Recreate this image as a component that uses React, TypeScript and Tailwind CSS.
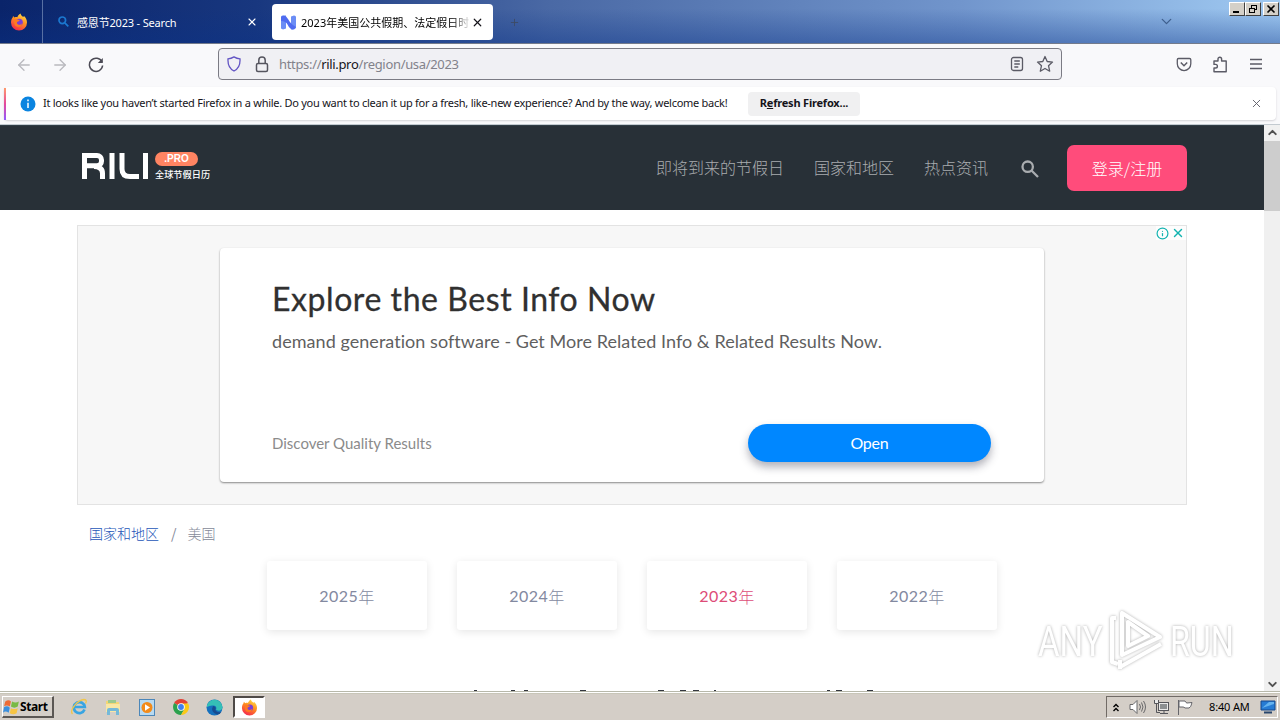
import React from "react";
import { ArrowLeft, ArrowRight, ChevronDown, ChevronUp, X, Info, Plus } from "lucide-react";

const ui = "font-['Noto_Sans','Noto_Sans_CJK_SC',sans-serif]";

function Firefox({ size }: { size: number }) {
  return (
    <svg width={size} height={size} viewBox="0 0 18 18" className="shrink-0">
      <defs>
        <linearGradient id="ff" x1="0.8" y1="0" x2="0.3" y2="1">
          <stop offset="0" stopColor="#ffe34a" />
          <stop offset="0.45" stopColor="#ff9020" />
          <stop offset="1" stopColor="#f5264e" />
        </linearGradient>
      </defs>
      <path
        d="M1 9.5C1 7 1.8 5.300 2.700 4.400L3 3l1.600 1.500C5.500 4 6.500 4 7.300 4.300 8 2.500 9 1.200 10.500.5c.2 1.700 1.500 2.400 2.700 3.600l.8-1c1.700 1.500 3 3.700 3 6.400a8 8 0 0 1-16 0z"
        fill="url(#ff)"
      />
      <circle cx="9.300" cy="9.300" r="3.500" fill="#7a3fd6" />
      <path d="M4 6.500c1.500-.8 3-.5 4 .3l1.800.4c-.4 1-1.500 1-2.300 1.500-.8.600-.8 2 .500 2.700 1.500.8 3.500 0 4-1.500-.1 3-2.500 4.200-4.500 3.900C5 13.500 3.800 11 4 6.500z" fill="#ff7a22" />
    </svg>
  );
}

function TabStrip() {
  return (
    <div className="relative flex h-[43px] shrink-0 bg-[linear-gradient(to_bottom,rgba(10,36,106,0)_20%,rgba(10,50,135,0.4)_100%),linear-gradient(to_right,#0a246a_0%,#18377f_20%,#4a69a5_43%,#7195cc_75%,#a0caf2_100%)]">
      <div className="flex w-[43px] items-center justify-center border-r border-[#5870a3] pr-1">
        <Firefox size={18} />
      </div>
      <div className="flex w-[229px] items-center pl-[15px] pr-[14px]">
        <svg width="11" height="11" viewBox="0 0 11 11" fill="none" stroke="#1b78d0" strokeWidth="1.700">
          <circle cx="4.300" cy="4.300" r="3.300" />
          <path d="M6.800 6.800L10.300 10.300" />
        </svg>
        <span className="ml-2 mt-[3px] flex-1 whitespace-nowrap text-[11px] tracking-[-0.18px] text-white">感恩节2023 - Search</span>
        <X size={12} strokeWidth={2.200} className="text-white" />
      </div>
      <div className="mt-1 flex h-9 w-[221px] items-center rounded-[4px] bg-white pl-[9px] pr-[9px]">
        <svg width="15" height="15" viewBox="0 0 15 15" className="shrink-0">
          <path d="M0 2Q0 .5 1.500.500H5v13L2 14.500 0 13.500z" fill="#6b8df5" />
          <path d="M10 1.500l3-1q2 0 2 1.500v11l-2 1.500h-3z" fill="#6b8df5" />
          <path d="M0 2Q4-1.500 7 4T15 12Q13 15.500 10 14 8 13 6.500 9.500T0 6z" fill="#4f6bf0" />
        </svg>
        <span className="ml-[5px] mt-[2px] w-[172px] shrink-0 whitespace-nowrap text-[11px] text-black [mask-image:linear-gradient(to_right,black_88%,transparent_99%)]">
          2023年美国公共假期、法定假日时
        </span>
        <X size={13} strokeWidth={2.200} className="-ml-[2px] shrink-0 text-[#15141a]" />
      </div>
      <div className="flex flex-1 items-center pl-4">
        <Plus size={11} strokeWidth={2} className="mt-0.5 text-[#3c4a66]" />
        <ChevronDown size={17} strokeWidth={1.800} className="ml-auto mr-[105px] text-[#3f5f8d]" />
      </div>
      <div className="absolute right-[1px] top-[2px] flex">
        {["min", "restore", "close"].map((k) => (
          <div key={k} className={`flex h-[14px] w-4 items-center justify-center border border-b-[#404040] border-l-white border-r-[#404040] border-t-white bg-[#d4d0c8] ${k === "close" ? "ml-[2px]" : ""}`}>
            <svg width="10" height="10" viewBox="0 0 10 10" fill="none" stroke="#000" shapeRendering="crispEdges">
              {k === "min" && <path d="M1 8h6" strokeWidth="2" />}
              {k === "restore" && <path d="M3 1.500h6M3 1v3M8.500 1v5M6 5.500h3M1 4.500h6M1.500 4v5M6.500 4v5M1 8.500h6" />}
              {k === "close" && <path d="M1.500 1.500l7 7M8.500 1.500l-7 7" strokeWidth="1.600" shapeRendering="auto" />}
            </svg>
          </div>
        ))}
      </div>
    </div>
  );
}

function NavBar() {
  return (
    <div className="flex h-[44px] shrink-0 items-center border-t border-[#747b8b] bg-[#f9f9fb] pb-[3px] text-[#5b5b66]">
      <ArrowLeft size={18} strokeWidth={1.700} className="ml-[15px] mt-px text-[#b9b9be]" />
      <ArrowRight size={18} strokeWidth={1.700} className="ml-[18px] mt-px text-[#b9b9be]" />
      <svg width="16" height="16" viewBox="0 0 16 16" fill="none" stroke="#4c4b55" strokeWidth="1.500" className="ml-[19px] mt-px">
        <path d="M14 5A6.600 6.600 0 1 0 14.600 8.500" />
        <path d="M14.800 1v5h-5z" fill="#4c4b55" stroke="none" />
      </svg>
      <div className="ml-[114px] flex h-[32px] w-[844px] items-center rounded-[4px] border border-[#7b7b84] bg-[#f0f0f4] pl-[8px] pr-[7px]">
        <svg width="14" height="16" viewBox="0 0 14 16" fill="none" stroke="#6254c4" strokeWidth="1.300">
          <path d="M7 .9c2 1.200 4 1.800 6 2 .3 5-1.500 9.800-6 12.100C2.500 12.700.7 7.900 1 2.900c2-.2 4-.8 6-2z" />
        </svg>
        <svg width="14" height="17" viewBox="0 0 14 17" fill="none" stroke="#55555f" strokeWidth="1.500" className="ml-[14px]">
          <rect x="1.500" y="7.500" width="11" height="8" rx="1.500" />
          <path d="M3.800 7.500V4.300a3.200 3.200 0 0 1 6.400 0v3.200" />
        </svg>
        <span className="ml-[10px] mt-[2px] flex-1 whitespace-nowrap text-[13px] tracking-[-0.33px] text-[#82828b]">
          https://<span className="text-[#15141a]">rili.pro</span>/region/usa/2023
        </span>
        <svg width="14" height="16" viewBox="0 0 14 16" fill="none" stroke="#5b5b66" strokeWidth="1.300">
          <rect x="1.500" y="1.500" width="11" height="13" rx="2" />
          <path d="M4.300 5h5.500M4.300 8h5.500M4.300 11h4" />
        </svg>
        <svg width="18" height="18" viewBox="0 0 18 18" fill="none" stroke="#5b5b66" strokeWidth="1.300" strokeLinejoin="round" className="ml-[12px]">
          <path d="M9 1.500l2.200 5 5.300.6-4 3.600 1.200 5.500L9 13.500l-4.700 2.700 1.200-5.500-4-3.600 5.300-.6z" />
        </svg>
      </div>
      <svg width="16" height="15" viewBox="0 0 16 15" fill="none" stroke="#5b5b66" strokeWidth="1.300" className="ml-[114px]">
        <path d="M2.500 1.500h11a1.300 1.300 0 0 1 1.300 1.300v4a6.700 6.700 0 0 1-13.500 0v-4a1.300 1.300 0 0 1 1.200-1.300z" />
        <path d="M4.800 5.500L8 8.700l3.200-3.200" strokeWidth="1.500" />
      </svg>
      <svg width="16" height="17" viewBox="0 0 16 17" fill="none" stroke="#5b5b66" strokeWidth="1.400" strokeLinejoin="round" className="ml-[20px]">
        <path d="M2 15.800V12h1.600a1.800 1.800 0 0 0 0-3.600H2V5h4V3a1.800 1.800 0 0 1 3.600 0v2h4.600v10.800z" />
      </svg>
      <svg width="14" height="12" viewBox="0 0 14 12" stroke="#5b5b66" strokeWidth="1.300" className="ml-[21px]">
        <path d="M1 1.500h12M1 6h12M1 10.500h12" />
      </svg>
    </div>
  );
}

function Notification() {
  return (
    <div className="h-[38px] shrink-0 border-b border-[#c3cad0] bg-[#f9f9fb] px-1">
      <div className="flex h-[33px] items-center rounded-[4px] bg-white shadow-[0_1px_2px_rgba(58,57,68,0.2)]">
        <div className="h-8 w-[2px] bg-[linear-gradient(#ff9a6c,#e4489c,#9059ff)]" />
        <svg width="16" height="16" viewBox="0 0 16 16" className="ml-[14px]">
          <circle cx="8" cy="8" r="7.500" fill="#0a84e0" />
          <path d="M8 3.500v1.800M8 6.800v5.200" stroke="#fff" strokeWidth="1.500" />
        </svg>
        <span className="ml-[7px] w-[685px] whitespace-nowrap text-[11px] tracking-[-0.265px] text-[#15141a]">
          It looks like you haven’t started Firefox in a while. Do you want to clean it up for a fresh, like-new experience? And by the way, welcome back!
        </span>
        <button className="ml-[20px] h-[24px] w-[112px] whitespace-nowrap rounded-[4px] bg-[#f0f0f1] text-[11px] font-bold tracking-[-0.2px] text-[#15141a]">
          R<span className="underline">e</span>fresh Firefox...
        </button>
        <X size={13} strokeWidth={1.700} className="ml-auto mr-[13px] text-[#5b5b66]" />
      </div>
    </div>
  );
}

function SiteHeader() {
  return (
    <header className="flex h-[85px] shrink-0 items-center border-t border-[#303d45] bg-[#283037] font-['Noto_Sans_CJK_SC',sans-serif] text-[16px] font-light text-[#a9acaf]">
      <div className="ml-[82px] mb-[5px] flex h-[28px] items-center">
        <svg width="67" height="26" viewBox="0 0 67 26" fill="none" stroke="#fff" strokeWidth="5">
          <path d="M2.500 26V2.500H15a4.500 4.500 0 0 1 4.500 4.500v1.200a4.500 4.500 0 0 1-4.500 4.500H5M12 13.500q8.500 0 8.500 7v5.500M30 0v26M40 0v16q0 7.500 8 7.500h9M63.500 0v26" />
        </svg>
        <div className="ml-[6px] flex flex-col">
          <span className="flex h-[14px] w-[43px] items-center justify-center rounded-full bg-[#ff8462] font-['Liberation_Sans',sans-serif] text-[10px] font-bold text-white">.PRO</span>
          <span className="mt-[3px] h-[11px] whitespace-nowrap text-[9.200px] font-medium leading-[11px] text-white">全球节假日历</span>
        </div>
      </div>
      <nav className="mb-[2px] ml-auto flex items-center whitespace-nowrap">
        <span>即将到来的节假日</span>
        <span className="ml-[30px]">国家和地区</span>
        <span className="ml-[30px]">热点资讯</span>
        <svg width="18" height="18" viewBox="0 0 18 18" fill="none" stroke="#a9acaf" strokeWidth="2.300" className="ml-[33px] mt-[3px]">
          <circle cx="6.700" cy="6.700" r="5.200" />
          <path d="M10.500 10.500L17 17" />
        </svg>
        <button className="ml-[28px] mr-[77px] mt-[2px] h-[46px] w-[120px] rounded-[7px] bg-[#ff4c7b] text-white">登录/注册</button>
      </nav>
    </header>
  );
}

function Ad() {
  return (
    <section className="relative ml-[77px] mt-[15px] h-[280px] w-[1110px] border border-[#e3e3e3] bg-[#f7f7f7] pl-[142px] pt-[22px] font-['Lato',sans-serif]">
      <div className="absolute right-0 top-0 flex gap-[2px] bg-white/80 pr-px text-[#12b3b0]">
        <Info size={13} strokeWidth={2.200} className="mt-px" />
        <X size={14} strokeWidth={2.400} />
      </div>
      <div className="h-[234px] w-[824px] rounded-[4px] bg-white pl-[52px] pt-[32px] shadow-[0_1px_2px_rgba(0,0,0,0.45)]">
        <h2 className="h-[38px] whitespace-nowrap text-[32px] leading-[38px] tracking-[0.56px] text-[#303030] [-webkit-text-stroke:0.3px_#303030]">
          Explore the Best Info Now
        </h2>
        <p className="mt-[11px] h-[24px] whitespace-nowrap text-[18px] leading-[24px] tracking-[0.05px] text-[#5f5f5f]">
          demand generation software - Get More Related Info &amp; Related Results Now.
        </p>
        <div className="mt-[71px] flex h-[38px] items-center">
          <span className="w-[476px] whitespace-nowrap text-[15px] text-[#8b8b8b]">Discover Quality Results</span>
          <button className="h-[38px] w-[243px] rounded-full bg-[#0087ff] text-[16px] tracking-[-0.2px] text-white shadow-[0_5px_9px_rgba(50,50,70,0.38)]">Open</button>
        </div>
      </div>
    </section>
  );
}

const years = ["2025", "2024", "2023", "2022"];

function Watermark() {
  return (
    <div className="absolute left-[1038px] top-[485px] flex items-center font-['Roboto',sans-serif] text-[43px] font-normal text-white [filter:drop-shadow(0_0_1.5px_rgba(0,0,0,0.32))]">
      <span className="inline-block w-[68px] origin-left scale-x-[0.77] leading-[60px]">ANY</span>
      <svg width="60" height="62" viewBox="0 0 60 62" fill="none" stroke="#fff" strokeWidth="4" strokeLinejoin="round">
        <path d="M16 3v42L54 27zM22 12v24L42 26z" />
        <path d="M10 8H6v44l6 2M14 57l41-23M14 50v9" />
      </svg>
      <span className="ml-[4px] inline-block origin-left scale-x-[0.75] leading-[60px]">RUN</span>
    </div>
  );
}

function Page() {
  return (
    <div className="flex h-[566px] shrink-0">
      <main className="relative flex w-[1264px] flex-col overflow-hidden bg-white">
        <SiteHeader />
        <Ad />
        <div className="ml-[89px] mt-[17px] flex h-[22px] items-center font-['Noto_Sans_CJK_SC',sans-serif] text-[14px] text-[#858a99]">
          <a className="font-light text-[#2456b8]">国家和地区</a>
          <span className="ml-[12px]">/</span>
          <span className="ml-[11px] font-light">美国</span>
        </div>
        <div className="ml-[267px] mt-[17px] flex gap-[30px]">
          {years.map((y) => (
            <div key={y} className={`flex h-[69px] w-[160px] items-center justify-center rounded-[3px] bg-white font-['Lato','Noto_Sans_CJK_SC',sans-serif] text-[16px] tracking-[0.45px] shadow-[0_2px_9px_rgba(0,0,0,0.1)] ${y === "2023" ? "text-[#dd4c78]" : "text-[#8389a0]"}`}>
              {y}
              <span className="font-['Noto_Sans_CJK_SC',sans-serif] font-light">年</span>
            </div>
          ))}
        </div>
        <svg width="400" height="1" viewBox="0 0 400 1" className="ml-[474px] mt-auto" stroke="#33373f" strokeWidth="1">
          <path d="M0 .5h3M37 .5h4M50 .5h4M106 .5h6M184 .5h6M206 .5h6M219 .5h6M240 .5h2M353 .5h3M362 .5h6M393 .5h6" />
        </svg>
        <Watermark />
      </main>
      <div className="flex w-4 flex-col items-center bg-[#f0f0f0] text-[#505050]">
        <ChevronUp size={13} strokeWidth={3.500} className="mt-[1px]" />
        <div className="mt-[2px] h-[70px] w-full bg-[#cdcdcd]" />
        <ChevronDown size={13} strokeWidth={3.500} className="mt-auto" />
      </div>
    </div>
  );
}

function Taskbar() {
  return (
    <div className="h-[29px] shrink-0 border-t border-[#b7b8aa] bg-white pt-px">
      <div className="flex h-full items-center border-t border-[#c8c6b8] bg-[#d4cec7]">
        <div className="ml-[2px] flex h-[22px] w-[52px] items-center border-b-2 border-r-2 border-l border-t border-b-[#5b5753] border-l-white border-r-[#5b5753] border-t-white">
          <svg width="17" height="17" viewBox="0 0 15 15" className="shrink-0">
            <path d="M2 3q3-2 5 0L6 7.500Q4 6 1 7z" fill="#ed6b35" />
            <path d="M8 3q3 2 6 0l-1 4.500q-3 2-6 0z" fill="#78ba46" />
            <path d="M1 8q3-1.500 5 .500L5 13q-3-2-5 0z" fill="#3b8fdd" />
            <path d="M7 9q3 1.500 6 0l-1 4.500q-3 1.500-6 0z" fill="#f6c443" />
          </svg>
          <span className="text-[12px] font-bold tracking-[-0.4px] text-black">Start</span>
        </div>
        <svg width="18" height="18" viewBox="0 0 18 18" fill="none" className="ml-[16px]">
          <path d="M14.500 11.500a5.500 5.500 0 1 1 .3-2.500H5" stroke="#39a5e2" strokeWidth="2.700" />
          <path d="M2.500 16C-1 12 8 2 14 1.500c3 0 2.500 2.500 1.500 4" stroke="#f0c64b" strokeWidth="1.300" />
        </svg>
        <svg width="18" height="18" viewBox="0 0 18 18" className="ml-[16px]">
          <path d="M2 3h5l1 1h7v5H2z" fill="#f3d675" />
          <path d="M4 2h8v3H4z" fill="#9bc98e" />
          <path d="M2 6h14v8H2z" fill="#f8e7a5" />
          <path d="M3 17v-5q0-2 2-2h8q2 0 2 2v5h-3v-4H6v4z" fill="#75b9d8" />
        </svg>
        <svg width="16" height="17" viewBox="0 0 16 17" className="ml-[17px]">
          <rect x=".5" y=".5" width="15" height="16" fill="#b8daf1" stroke="#4c87b9" />
          <circle cx="8" cy="8.500" r="5.500" fill="#f38b19" />
          <path d="M6 5.300l5 3.200-5 3.200z" fill="#fff" />
        </svg>
        <svg width="16" height="16" viewBox="0 0 16 16" className="ml-[18px]">
          <path d="M8 8L1.100 4A8 8 0 0 1 14.900 4z" fill="#e24236" />
          <path d="M8 8L1.100 4A8 8 0 0 0 8 16l4-7z" fill="#2ca14d" />
          <path d="M8 4.500h7.200A8 8 0 0 1 8 16l3.500-6z" fill="#fbc916" />
          <circle cx="8" cy="8" r="3.800" fill="#fff" />
          <circle cx="8" cy="8" r="2.900" fill="#4080ee" />
        </svg>
        <svg width="17" height="17" viewBox="0 0 17 17" className="ml-[17px]">
          <circle cx="8.500" cy="8.500" r="8" fill="#1570bd" />
          <path d="M1 6A8 8 0 0 1 16.500 8c0 4-5 4.500-6.500 2.500 1-2 0-4-2.500-4Q4 6 1 8z" fill="#35bfb6" />
          <path d="M7 7q-3 6 4 8.500 3 0 4.300-2.500-5 1-6-2.500Q11 8 7 7z" fill="#174b8f" />
        </svg>
        <div className="ml-[10px] flex h-[22px] w-[32px] items-center justify-center border-2 border-b-white border-l-[#4e4a47] border-r-white border-t-[#4e4a47] bg-white">
          <Firefox size={17} />
        </div>
        <div className="ml-auto mr-[2px] flex h-[22px] w-[172px] items-center border border-b-white border-l-[#716b66] border-r-white border-t-[#716b66] pl-[5px] pr-[1px]">
          <svg width="8" height="9" viewBox="0 0 8 9" fill="none" stroke="#000" strokeWidth="1.400">
            <path d="M1.500 4L4 1.500 6.500 4M1.500 8L4 5.500 6.500 8" />
          </svg>
          <svg width="17" height="16" viewBox="0 0 17 16" fill="#fff" stroke="#68686a" className="ml-[9px]">
            <path d="M1 5.500h3L8 1.500v13l-4-4H1z" />
            <path d="M10.500 5q2 3 0 6M12.500 3.500q3 4.500 0 9M14.500 2q4 6 0 12" fill="none" />
          </svg>
          <svg width="17" height="16" viewBox="0 0 17 16" fill="#e9e9e9" stroke="#55555a" className="ml-[7px]">
            <rect x="5.500" y="3.500" width="10" height="8" />
            <rect x="7" y="5" width="7" height="5" fill="#8c8f91" stroke="none" />
            <path d="M7 14.500h8M11 12v2M3.500 5v8.500H7" fill="none" />
            <path d="M1.500 1v3.500h4V1" />
          </svg>
          <svg width="16" height="16" viewBox="0 0 16 16" fill="#fff" stroke="#65656a" className="ml-[7px]">
            <path d="M1.500 1v15M2 2h6q1 2 2 2l5-.5q-1 5-3 5.500H8q-1-1-2-1H2z" />
          </svg>
          <span className="ml-[16px] whitespace-nowrap text-[11px] tracking-[-0.15px] text-black">8:40 AM</span>
          <svg width="16" height="14" viewBox="0 0 16 14" className="ml-auto">
            <path d="M1 1h14v9H1z" fill="#267bd3" stroke="#16498b" />
            <path d="M2 8L9 2h5v2z" fill="#65b3ef" />
            <path d="M4 12.500h8" stroke="#28466d" strokeWidth="2" />
          </svg>
        </div>
      </div>
    </div>
  );
}

export default function App() {
  return (
    <div className={`flex h-[720px] w-[1280px] flex-col overflow-hidden bg-white ${ui}`}>
      <TabStrip />
      <NavBar />
      <Notification />
      <Page />
      <Taskbar />
    </div>
  );
}
